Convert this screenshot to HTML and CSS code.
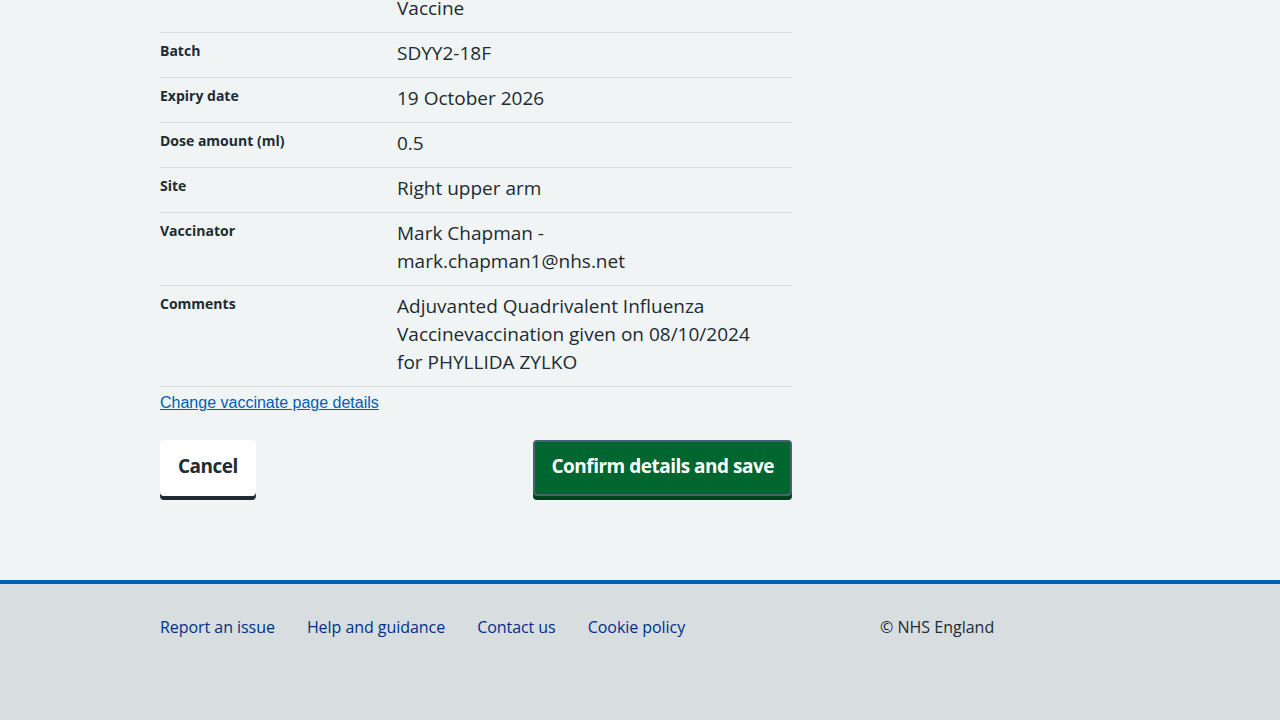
FILE: index.html
```html
<!DOCTYPE html>
<html lang="en">
<head>
<meta charset="utf-8">
<title>Check and confirm</title>
<link rel="stylesheet" href="styles.css">
</head>
<body>
<main class="page">
  <div class="content">
    <dl class="summary">
      <div class="row first">
        <dt class="key">Vaccine</dt>
        <dd class="value">Adjuvanted Quadrivalent Influenza<br>Vaccine</dd>
      </div>
      <div class="row">
        <dt class="key">Batch</dt>
        <dd class="value">SDYY2-18F</dd>
      </div>
      <div class="row">
        <dt class="key">Expiry date</dt>
        <dd class="value">19 October 2026</dd>
      </div>
      <div class="row">
        <dt class="key">Dose amount (ml)</dt>
        <dd class="value">0.5</dd>
      </div>
      <div class="row">
        <dt class="key">Site</dt>
        <dd class="value">Right upper arm</dd>
      </div>
      <div class="row">
        <dt class="key">Vaccinator</dt>
        <dd class="value">Mark Chapman -<br>mark.chapman1@nhs.net</dd>
      </div>
      <div class="row">
        <dt class="key">Comments</dt>
        <dd class="value">Adjuvanted Quadrivalent Influenza<br>Vaccinevaccination given on 08/10/2024<br>for PHYLLIDA ZYLKO</dd>
      </div>
    </dl>
    <a class="change-link" href="#">Change vaccinate page details</a>
    <div class="actions">
      <button class="btn btn-secondary" type="button">Cancel</button>
      <button class="btn btn-primary" type="button">Confirm details and save</button>
    </div>
  </div>
</main>
<footer class="footer">
  <div class="footer-inner">
    <ul class="footer-links">
      <li><a href="#">Report an issue</a></li>
      <li><a href="#">Help and guidance</a></li>
      <li><a href="#">Contact us</a></li>
      <li><a href="#">Cookie policy</a></li>
    </ul>
    <p class="copyright">© NHS England</p>
  </div>
</footer>
</body>
</html>
```
FILE: styles.css
```css
* { box-sizing: border-box; }
html, body {
  margin: 0;
  padding: 0;
  background: #f0f4f5;
  color: #212b32;
  font-family: "Open Sans", "Noto Sans", sans-serif;
}
.page {
  padding: 0 160px;
  height: 580px;
  overflow: hidden;
}
.content {
  width: 632px;
}
.summary {
  margin: -40px 0 0 0;
  padding: 0;
}
.row {
  display: grid;
  grid-template-columns: 237px 1fr;
  border-bottom: 1px solid #d8dde0;
  padding: 6px 0 10px;
}
.key {
  margin: 2px 0 0;
  font-size: 14px;
  font-weight: 700;
  line-height: 20px;
}
.value {
  margin: 0;
  font-size: 19px;
  line-height: 28px;
}
.change-link {
  display: inline-block;
  margin-top: 6px;
  font-family: "Liberation Sans", Arial, sans-serif;
  font-size: 16px;
  line-height: 19px;
  color: #005eb8;
  text-decoration: underline;
}
.actions {
  display: flex;
  justify-content: space-between;
  margin-top: 27px;
}
.btn {
  font-family: inherit;
  font-size: 19px;
  font-weight: 700;
  line-height: 28px;
  padding: 10px 16px 14px;
  border: 2px solid transparent;
  border-radius: 4px;
  cursor: pointer;
  letter-spacing: -0.5px;
}
.btn-secondary {
  background: #ffffff;
  color: #212b32;
  box-shadow: 0 4px 0 #212b32;
}
.btn-primary {
  background: #00662f;
  color: #ffffff;
  border-color: #4c6272;
  box-shadow: 0 4px 0 #00401e;
}
.footer {
  background: #d8dde0;
  border-top: 4px solid #005eb8;
  height: 140px;
}
.footer-inner {
  margin: 0 160px;
  width: 960px;
  display: grid;
  grid-template-columns: 720px 240px;
  padding-top: 31px;
}
.footer-links {
  list-style: none;
  margin: 0;
  padding: 0;
  display: flex;
  gap: 32px;
}
.footer-links a {
  color: #003087;
  text-decoration: none;
  font-size: 16px;
  line-height: 24px;
  letter-spacing: -0.05px;
}
.copyright {
  margin: 0;
  font-size: 16px;
  line-height: 24px;
  color: #212b32;
}
```
